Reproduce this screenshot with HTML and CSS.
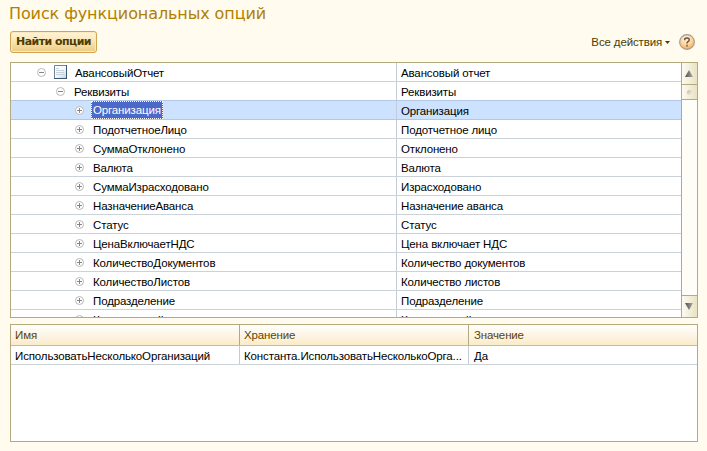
FILE: index.html
```
<!DOCTYPE html>
<html lang="ru">
<head>
<meta charset="utf-8">
<title>Поиск функциональных опций</title>
<link rel="stylesheet" href="styles.css">
</head>
<body>
<svg class="defs" width="0" height="0">
  <defs>
    <symbol id="plus" viewBox="0 0 9 9"><circle cx="4.5" cy="4.5" r="4" fill="#fff" stroke="#b8b8b8"/><path d="M2 4.500h5M4.500 2v5" stroke="#858585"/></symbol>
    <symbol id="minus" viewBox="0 0 9 9"><circle cx="4.5" cy="4.5" r="4" fill="#fff" stroke="#b8b8b8"/><path d="M2 4.500h5" stroke="#858585"/></symbol>
    <linearGradient id="tri" x1="0" x2="1"><stop offset="0" stop-color="#505050"/><stop offset="1" stop-color="#aaa"/></linearGradient>
  </defs>
</svg>
<h1 class="title"><span>Поиск функциональных опций</span></h1>
<div class="toolbar">
  <button class="find"><span>Найти опции</span></button>
  <div class="actions"><span>Все действия</span><svg width="5" height="3" viewBox="0 0 5 3"><path d="M0 0h5L2.5 3z" fill="#4f3c00"/></svg></div>
  <svg class="help" width="16" height="16" viewBox="0 0 16 16">
    <defs><radialGradient id="hg" cx=".45" cy=".3" r=".7"><stop offset="0" stop-color="#fff0d8"/><stop offset=".55" stop-color="#fdd6a0"/><stop offset="1" stop-color="#f5a952"/></radialGradient></defs>
    <circle cx="8" cy="8" r="7.4" fill="url(#hg)" stroke="#a99a92" stroke-width="1.1"/>
    <path d="M5.700 6.200V5.500Q5.700 4 8 4t2.300 1.800Q10.300 7 9 7.600 8 8.200 8 9.500M8 10.800v1.700" fill="none" stroke="#62504a" stroke-width="1.400"/>
  </svg>
</div>
<div class="panel tree">
  <div class="rows">
    <div class="row l0"><div class="name"><svg class="tog"><use href="#minus"/></svg><svg class="doc" width="13" height="14" viewBox="0 0 13 14"><defs><linearGradient id="dg" x2="1" y2="1"><stop offset="0" stop-color="#fff"/><stop offset=".5" stop-color="#f6fafd"/><stop offset="1" stop-color="#bdd2e6"/></linearGradient></defs><path d="M.5.5h12v13H.5z" fill="url(#dg)" stroke="#6f8499"/><path d="M0 13.500h13M12.500 0v14" stroke="#3d566e" fill="none"/><path d="M2 3.500h3M2 5.500h8M2 7.500h8M2 9.500h8" stroke="#c6d1dc"/></svg><span>АвансовыйОтчет</span></div><div class="syn">Авансовый отчет</div></div>
    <div class="row l1"><div class="name"><svg class="tog"><use href="#minus"/></svg><span>Реквизиты</span></div><div class="syn">Реквизиты</div></div>
    <div class="row l2 current"><div class="name"><svg class="tog"><use href="#plus"/></svg><span class="sel">Организация</span></div><div class="syn">Организация</div></div>
    <div class="row l2"><div class="name"><svg class="tog"><use href="#plus"/></svg><span>ПодотчетноеЛицо</span></div><div class="syn">Подотчетное лицо</div></div>
    <div class="row l2"><div class="name"><svg class="tog"><use href="#plus"/></svg><span>СуммаОтклонено</span></div><div class="syn">Отклонено</div></div>
    <div class="row l2"><div class="name"><svg class="tog"><use href="#plus"/></svg><span>Валюта</span></div><div class="syn">Валюта</div></div>
    <div class="row l2"><div class="name"><svg class="tog"><use href="#plus"/></svg><span>СуммаИзрасходовано</span></div><div class="syn">Израсходовано</div></div>
    <div class="row l2"><div class="name"><svg class="tog"><use href="#plus"/></svg><span>НазначениеАванса</span></div><div class="syn">Назначение аванса</div></div>
    <div class="row l2"><div class="name"><svg class="tog"><use href="#plus"/></svg><span>Статус</span></div><div class="syn">Статус</div></div>
    <div class="row l2"><div class="name"><svg class="tog"><use href="#plus"/></svg><span>ЦенаВключаетНДС</span></div><div class="syn">Цена включает НДС</div></div>
    <div class="row l2"><div class="name"><svg class="tog"><use href="#plus"/></svg><span>КоличествоДокументов</span></div><div class="syn">Количество документов</div></div>
    <div class="row l2"><div class="name"><svg class="tog"><use href="#plus"/></svg><span>КоличествоЛистов</span></div><div class="syn">Количество листов</div></div>
    <div class="row l2"><div class="name"><svg class="tog"><use href="#plus"/></svg><span>Подразделение</span></div><div class="syn">Подразделение</div></div>
    <div class="row l2"><div class="name"><svg class="tog"><use href="#plus"/></svg><span>Комментарий</span></div><div class="syn">Комментарий</div></div>
  </div>
  <div class="scroll">
    <div class="up"><svg width="8" height="7" viewBox="0 0 8 7"><path d="M4 0l4 7H0z" fill="url(#tri)"/></svg></div>
    <div class="thumb"><i></i></div>
    <div class="down"><svg width="8" height="7" viewBox="0 0 8 7"><path d="M4 7l4-7H0z" fill="url(#tri)"/></svg></div>
  </div>
</div>
<div class="panel options">
  <div class="line head"><div>Имя</div><div>Хранение</div><div>Значение</div></div>
  <div class="line"><div>ИспользоватьНесколькоОрганизаций</div><div>Константа.ИспользоватьНесколькоОрга...</div><div>Да</div></div>
</div>
</body>
</html>
```
FILE: styles.css
```
* { box-sizing: border-box; }
body {
  margin: 0;
  height: 451px;
  padding: 0 9px 0 10px;
  overflow: hidden;
  background: #fffbee;
  color: #000;
  font: 11.5px/18px "Liberation Sans", sans-serif;
  letter-spacing: -0.14px;
}
svg { display: block; flex: none; }
.defs { position: absolute; }
.title {
  margin: 0 0 0 -1px;
  height: 31px;
  font: 16px/27px "DejaVu Sans", sans-serif;
  letter-spacing: -0.1px;
  color: #b08000;
  white-space: nowrap;
}
.toolbar { display: flex; height: 31px; align-items: flex-start; }
.find {
  width: 87px;
  height: 22px;
  padding: 0;
  border: 1px solid #cfa64f;
  border-radius: 3px;
  background: linear-gradient(#fff5dc, #f9e3b0 50%, #eccb83);
  box-shadow: inset 0 0 0 1px #fbe9c2;
  font: bold 11px/18px "DejaVu Sans", sans-serif;
  letter-spacing: -0.55px;
  color: #4f3c00;
  white-space: nowrap;
}
.actions {
  display: flex;
  align-items: center;
  gap: 3px;
  height: 22px;
  margin-left: auto;
  color: #4f3c00;
}
.help { margin: 3px 3px 0 9px; }
.panel { border: 1px solid #b3aa80; background: #fff; overflow: hidden; }
.tree { display: flex; height: 256px; }
.rows { flex: 1; height: 254px; overflow: hidden; }
.row { display: grid; grid-template-columns: 386px 1fr; height: 19px; border-bottom: 1px solid #ccd3d8; white-space: nowrap; }
.name { display: flex; align-items: center; border-right: 1px solid #c3ccd6; height: 18px; }
.l0 .name { padding-left: 26px; }
.l1 .name { padding-left: 45px; }
.l2 .name { padding-left: 64px; }
.name span { margin-left: 9px; padding-top: 1px; height: 18px; }
.tog { width: 9px; height: 9px; }
.doc { margin-left: 8px; }
.l0 .name span { margin-left: 8px; }
.syn { padding: 1px 0 0 4px; height: 18px; }
.current { background: #cde2ff; border-color: #b2c8e6; box-shadow: 0 -1px #b2c8e6; }
.name .sel { margin-left: 7px; padding: 0 1px; height: 18px; line-height: 17px; border: 1px dotted #fff; background: #4c68c8; color: #fff; }
.scroll { display: flex; flex-direction: column; width: 16px; border-left: 1px solid #b3aa80; background: #fffdf8; }
.up, .down, .thumb { display: flex; justify-content: center; align-items: center; background: linear-gradient(90deg, #fdfbf1, #e9e2c3); }
.up { height: 22px; padding-right: 1px; padding-bottom: 1px; border-bottom: 1px solid #b3aa80; }
.thumb { height: 15px; border-bottom: 1px solid #b3aa80; }
.thumb i { width: 5px; height: 5px; border-radius: 50%; background: linear-gradient(135deg, #bcb89f, #f8f5e5); }
.down { height: 22px; margin-top: auto; padding-right: 1px; border-top: 1px solid #b3aa80; }
.options { height: 118px; margin-top: 6px; }
.line { display: grid; grid-template-columns: 229px 229px 1fr; height: 19px; border-bottom: 1px solid #ccd3d8; white-space: nowrap; }
.line div { padding: 1px 0 0 4px; border-right: 1px solid #c3ccd6; overflow: hidden; }
.line div:last-child { border-right: 0; padding-left: 5px; }
.head { height: 21px; border-color: #c5baa5; background: linear-gradient(#fffefb, #fdf5e7 50%, #faebc8); color: #5c4300; }
.head div { border-color: #b3aa80; }
```
